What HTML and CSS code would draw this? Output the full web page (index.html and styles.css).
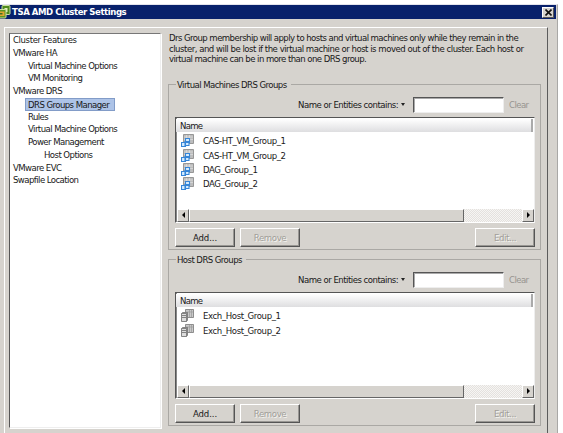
FILE: index.html
```html
<!DOCTYPE html>
<html lang="en">
<head>
<meta charset="utf-8">
<title>TSA AMD Cluster Settings</title>
<link rel="stylesheet" href="styles.css">
</head>
<body>
<svg class="defs" width="0" height="0" aria-hidden="true">
  <symbol id="vm" viewBox="0 0 13 13">
    <path fill="#bdbdbd" stroke="#858585" stroke-width=".8" d="M2.5.5h10v9h-10z"/>
    <path fill="none" stroke="#e6e6e6" stroke-width=".6" d="M3 3h9M3 5.5h9M5.5 1v8M8.5 1v8"/>
    <path fill="#d4ecff" stroke="#3585d8" stroke-width="1.1" d="M4.5 4.5h4v4h-4zM.5 8.5h4v4h-4zM4 7.5h4v4h-4z"/>
  </symbol>
  <symbol id="host" viewBox="0 0 13 13">
    <path fill="#c9c9c9" stroke="#777" stroke-width=".8" d="M4.5.5h8v8h-8z"/>
    <path fill="none" stroke="#999" stroke-width=".7" d="M5 3h7M8.5 1v7M10.5 1v7"/>
    <path fill="#ddd" stroke="#777" stroke-width=".9" d="M.5 4.5l1-1h5v8l-1 1h-5zM.5 4.5h5v8M5.5 4.5l1-1M1 6.5h4M1 8.5h4"/>
  </symbol>
</svg>
<main class="window">
  <header class="titlebar">
    <svg class="logo" width="11" height="14" viewBox="0 0 11 14"><rect x="2" y=".5" width="8" height="9" rx="1" fill="#4f8a1c" stroke="#c9dfa0"/><path fill="#e4efb8" d="M4.5 3h3v4h-3z"/><rect x="-2" y="4.5" width="8" height="8.5" rx="1" fill="#5c9423" stroke="#c9dfa0"/><path fill="#e0a52e" d="M0 6.5h4.5V11H0z"/><path fill="#416f24" d="M0 8h2.5v1.5H0z"/></svg>
    <h1>TSA AMD Cluster Settings</h1>
    <button class="close" aria-label="Close"><svg width="7" height="7" viewBox="0 0 7 7"><path d="M.5.5l6 6M6.5.5l-6 6" stroke="#111" stroke-width="1.6"/></svg></button>
  </header>
  <div class="panel">
    <nav class="tree">
      <div class="wide"><span>Cluster Features</span></div>
      <div><span>VMware HA</span></div>
      <div class="l1"><span>Virtual Machine Options</span></div>
      <div class="l1"><span>VM Monitoring</span></div>
      <div><span>VMware DRS</span></div>
      <div class="l1"><span class="selected">DRS Groups Manager</span></div>
      <div class="l1"><span>Rules</span></div>
      <div class="l1"><span>Virtual Machine Options</span></div>
      <div class="l1"><span>Power Management</span></div>
      <div class="l2"><span>Host Options</span></div>
      <div><span>VMware EVC</span></div>
      <div><span>Swapfile Location</span></div>
    </nav>
    <section class="content">
      <p class="intro"><span>Drs Group membership will apply to hosts and virtual machines only while they remain in the</span><br><span class="loose">cluster, and will be lost if the virtual machine or host is moved out of the cluster. Each host or</span><br><span>virtual machine can be in more than one DRS group.</span></p>
      <fieldset class="group">
        <legend>Virtual Machines DRS Groups</legend>
        <div class="filter"><span class="flabel">Name or Entities contains:</span><i class="down"></i><input type="text" aria-label="Filter"><span class="clear">Clear</span></div>
        <div class="list">
          <div class="head"><span>Name</span></div>
          <ul>
            <li><svg><use href="#vm"/></svg><span class="row">CAS-HT_VM_Group_1</span></li>
            <li><svg><use href="#vm"/></svg><span class="row">CAS-HT_VM_Group_2</span></li>
            <li><svg><use href="#vm"/></svg><span class="wide">DAG_Group_1</span></li>
            <li><svg><use href="#vm"/></svg><span class="wide">DAG_Group_2</span></li>
          </ul>
          <div class="scroll"><b class="arrow left"></b><b class="thumb"></b><b class="arrow right"></b></div>
        </div>
        <div class="buttons"><button>Add...</button><button disabled>Remove</button><button class="edit" disabled>Edit...</button></div>
      </fieldset>
      <fieldset class="group second">
        <legend>Host DRS Groups</legend>
        <div class="filter"><span class="flabel">Name or Entities contains:</span><i class="down"></i><input type="text" aria-label="Filter"><span class="clear">Clear</span></div>
        <div class="list">
          <div class="head"><span>Name</span></div>
          <ul>
            <li><svg><use href="#host"/></svg><span class="wide">Exch_Host_Group_1</span></li>
            <li><svg><use href="#host"/></svg><span class="wide">Exch_Host_Group_2</span></li>
          </ul>
          <div class="scroll"><b class="arrow left"></b><b class="thumb"></b><b class="arrow right"></b></div>
        </div>
        <div class="buttons"><button>Add...</button><button disabled>Remove</button><button class="edit" disabled>Edit...</button></div>
      </fieldset>
    </section>
  </div>
</main>
</body>
</html>
```
FILE: styles.css
```css
* { box-sizing: border-box; }
body {
  margin: 0;
  padding-top: 4px;
  height: 433px;
  overflow: hidden;
  background: #fff;
  color: #181818;
  font: 9.5px/13px "DejaVu Sans Condensed", "DejaVu Sans", sans-serif;
  font-stretch: condensed;
  letter-spacing: -.56px;
  white-space: nowrap;
}
.defs { display: block; height: 0; }
.window { width: 558px; height: 429px; background: #d6d3ce; border-top: 1px solid #e4e4ec; border-right: 1px solid #a9a8a6; }
.titlebar { display: flex; align-items: center; width: 556px; height: 14px; background: #08216b; color: #fff; }
.titlebar h1 { margin: 0 0 0 1px; font-size: 9.5px; line-height: 14px; letter-spacing: -.43px; }
.logo { display: block; }
button { font: inherit; letter-spacing: -.1px; color: inherit; padding: 0; border: 1px solid; border-color: #fff #555 #555 #fff; background: #d6d3ce; box-shadow: inset -1px -1px #999793; }
.close { display: flex; align-items: center; justify-content: center; width: 12px; height: 11px; margin-left: auto; margin-right: 2px; box-shadow: none; }
.panel { display: flex; width: 544px; height: 406px; margin: 8px 0 0 4px; padding: 5px 0 0 5px; border: 1px solid #fff; border-right: 1px solid #5c5c5c; border-bottom: 0; }
.tree { width: 152px; height: 395px; margin-left: -1px; padding: 0 0 0 3px; background: #fff; border: 1px solid; border-color: #777 #eee #eee #555; box-shadow: 1px 1px #fff; }
.tree div { height: 12.75px; line-height: 12.75px; }
.tree .l1 { padding-left: 15px; }
.tree .l2 { padding-left: 31px; }
.wide { letter-spacing: -.38px; }
.row { letter-spacing: -.4px; }
.loose { letter-spacing: -.48px; }
.selected { display: block; width: 90px; height: 13px; margin-left: -3px; padding: 0 0 0 2px; border: 1px solid #829cc8; background: #adc3e7; line-height: 11px; }
.content { width: 373px; margin-left: 7px; }
.intro { margin: 0 0 0 1px; line-height: 10.5px; }
.group { height: 172px; margin: 13px 0 0; padding: 0 5px 0 6px; min-width: 0; border: 1px solid #aaa8a4; }
.group.second { margin-top: 3px; height: 173px; }
legend { height: 13px; margin: 0 0 0 1px; padding: 0 4px 0 1px; }
.filter { display: flex; align-items: center; height: 16px; margin-top: 6px; }
.flabel { width: 103px; margin-left: 123px; letter-spacing: -.5px; }
.down { border: 2.5px solid transparent; border-top: 3px solid #222; border-bottom: 0; width: 0; height: 0; }
.filter input { width: 91px; height: 16px; margin: 0 0 0 8px; padding: 0; border: 1px solid; border-color: #555 #eee #eee #555; background: #fff; box-shadow: inset 1px 1px #aaa; }
.clear { margin-left: 5px; color: #96938e; }
.list { display: flex; flex-direction: column; width: 360px; height: 106px; margin-top: 4px; background: #fff; border: 1px solid; border-color: #555 #eee #fff #555; box-shadow: inset 1px 0 #888; padding-top: 1px; }
.second .list { height: 107px; }
.head { height: 13px; margin-right: 1px; padding-left: 4px; line-height: 13px; letter-spacing: -.7px; background: linear-gradient(#fff, #dedee0); border-right: 2px solid #aaa; }
ul { list-style: none; flex: 1; margin: 0; padding: 2px 0 0 5px; }
li { display: flex; align-items: center; height: 14.4px; }
li svg { width: 13px; height: 13px; margin-right: 9px; }
.scroll { display: flex; height: 13px; margin-left: 1px; background: repeating-conic-gradient(#e4e1de 0 25%, #f6f5f3 0 50%) 0 0/2px 2px; }
.arrow, .thumb { border: 1px solid; border-color: #fff #666 #666 #fff; background: #d6d3ce; }
.arrow { display: flex; align-items: center; justify-content: center; width: 12px; }
.arrow::before { content: ""; border: 3px solid transparent; }
.left::before { border-right-color: #000; border-left: 0; }
.right { margin-left: auto; }
.right::before { border-left-color: #000; border-right: 0; }
.thumb { width: 275px; }
.buttons { display: flex; gap: 5px; margin-top: 5px; }
.buttons button { width: 60px; height: 19px; }
.buttons button:disabled { letter-spacing: -.35px; }
.buttons .edit { margin-left: auto; }
button:disabled { color: #a19e99; text-shadow: 1px 1px #f4f3f0; }
```
